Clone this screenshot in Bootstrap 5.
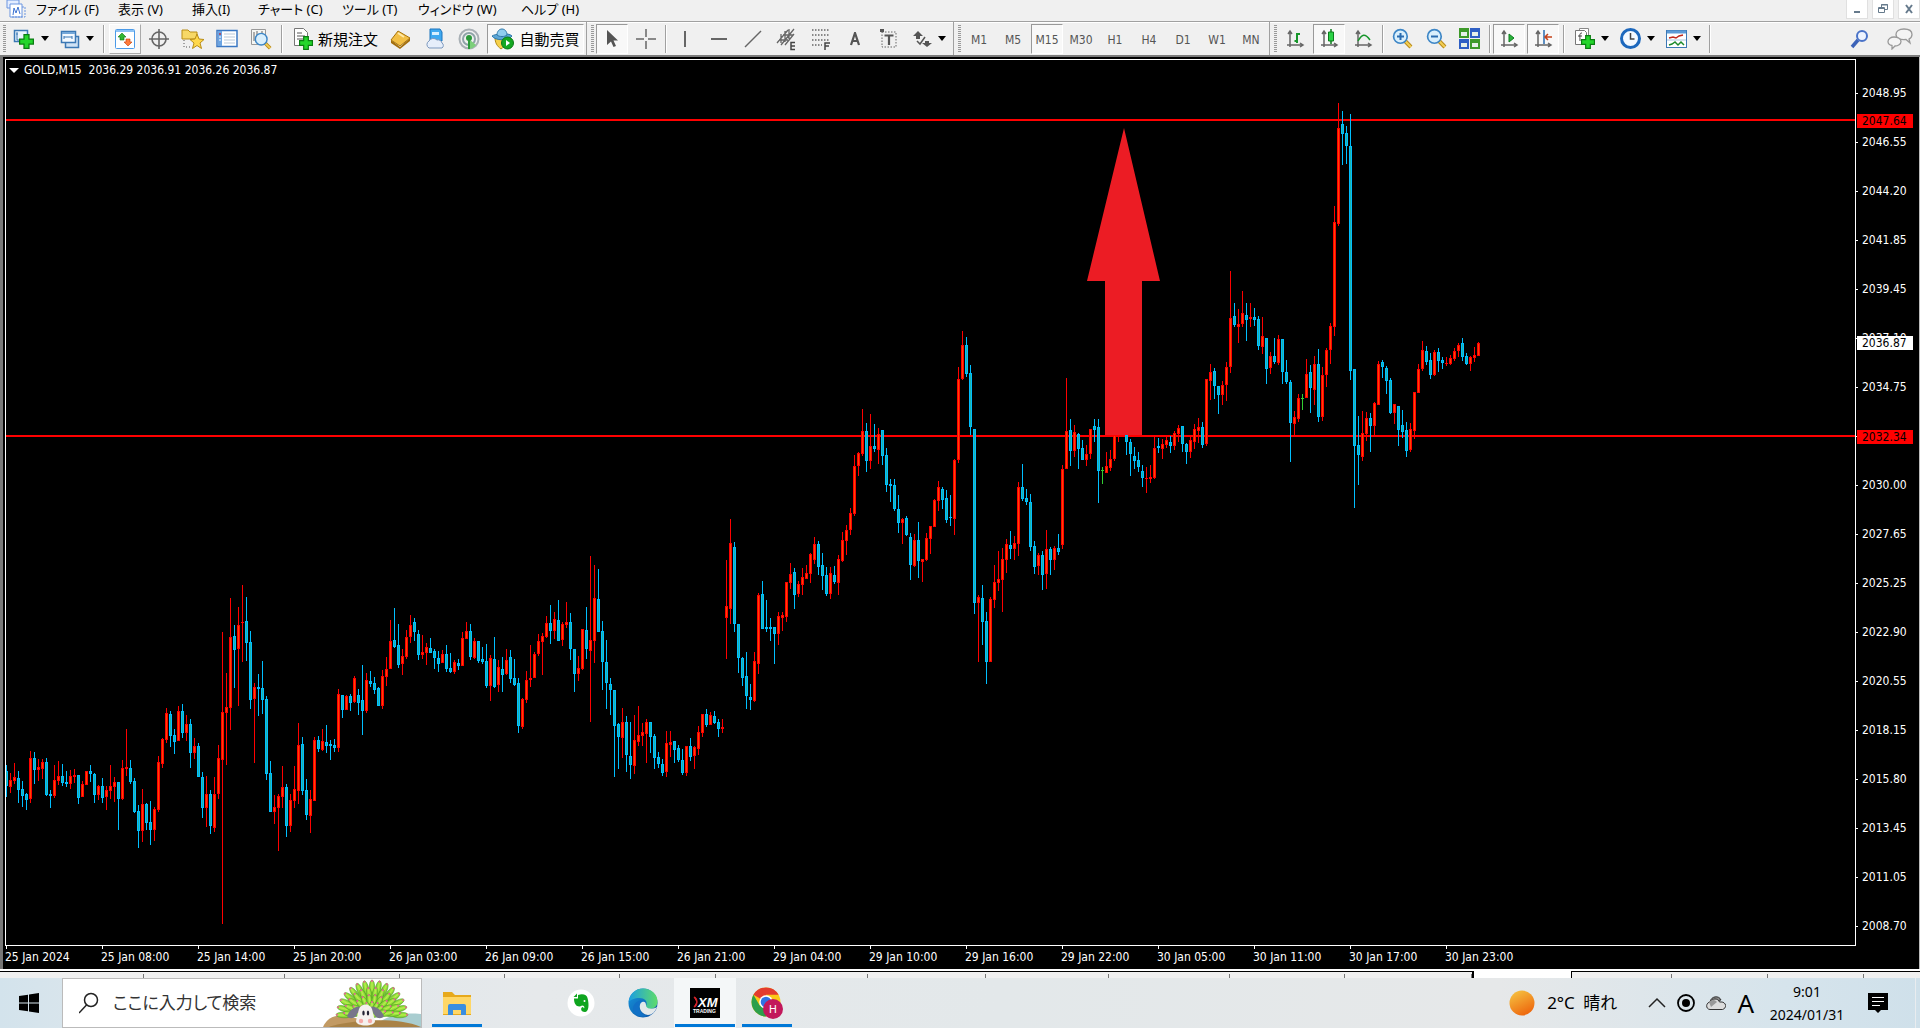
<!DOCTYPE html>
<html lang="ja">
<head>
<meta charset="utf-8">
<meta name="viewport" content="width=device-width, initial-scale=1">
<title>GOLD,M15</title>
<link rel="stylesheet" href="https://cdn.jsdelivr.net/npm/bootstrap@5.3.0/dist/css/bootstrap.min.css">
<style>
:root{--ui:"DejaVu Sans Condensed","Noto Sans","Noto Sans CJK JP",sans-serif;--jp:"Noto Sans","Noto Sans CJK JP",sans-serif}
body{background:#f0f0f0;font-family:var(--ui);font-size:12px;line-height:16px;color:#000;overflow-x:hidden}
button{font:inherit;color:inherit;background:none;border:1px solid transparent;padding:0}
svg{display:block;flex:none}
.menubar{height:21px;padding-left:6px}
.menu-list{grid-template-columns:82px 74px 66px 84px 76px 103px auto;font-family:var(--jp);font-size:13px;line-height:18px;font-feature-settings:"palt";margin-left:10px}
.menu-list button{text-align:left;border:0;white-space:nowrap}
.winbtn{width:22px;height:19px;background:#fff;border:1px solid #e0e0e0;border-top:0}
.toolbar{height:36px;border-top:1px solid #a0a0a0;border-bottom:2px solid #7c7c7c;gap:2px;box-shadow:inset 0 1px #fff}
.tb{width:32px;height:30px;display:flex;align-items:center;justify-content:center;flex:none;color:#555;white-space:nowrap}
.tb.tf{padding-top:2px}
.tb.drop{width:44px;gap:6px}
.tb.drop::after{content:"";border:4px solid transparent;border-top:5px solid #000;border-bottom:0}
.tb.order,.tb.auto{width:96px;gap:4px;font-family:var(--jp);font-size:15px;color:#000}
.tb.auto{width:97px}
.tb.on{border-color:#999 #fff #fff #999;background:#f8f8f8}
.tb.raised{border-color:#fff #aaa #aaa #fff;background:#f8f8f8}
.sep,.thin{width:6px;height:28px;flex:none;background:linear-gradient(90deg,transparent 2px,#a0a0a0 2px 3px,#fff 3px 4px,transparent 4px)}
.thin{width:3px;background:linear-gradient(90deg,transparent 1px,#a0a0a0 1px 2px,#fff 2px)}
.edge{width:8px;height:33px;flex:none;border-left:1px solid #a0a0a0;background:repeating-linear-gradient(#999 0 1px,#f0f0f0 1px 2px) 4px 3px/3px 27px no-repeat}
.edge:first-child{width:7px;border-left:0;background-position:3px 3px}
.chart{background:#000;color:#fff;border-left:3px solid #777;border-right:1px solid #bbb;padding:2px 0 0 2px}
.plot{border:1px solid #fff;overflow:hidden}
.plot svg{position:absolute;left:0;top:0;width:100%;height:100%}
.quote{left:3px;top:2px;white-space:pre}
.tri{border:5px solid transparent;border-top:5px solid #fff;border-bottom:0;margin-right:5px}
.paxis{width:63px;padding-top:10px}
.paxis .tick{height:49px;line-height:49px;padding-left:6px;position:relative}
.paxis .tick:last-of-type{height:40px}
.paxis .tick::before{content:"";position:absolute;left:0;top:24px;width:2px;height:1px;background:#fff}
.tag{position:absolute;left:1px;width:56px;height:14px;line-height:14px;padding-left:5px;color:#000;background:red}
.tag.r1{top:55px}.tag.r2{top:371px}.tag.now{top:277px;background:#fff}
.taxis{height:23px}
.taxis span{width:96px;flex:none;position:relative;padding-top:3px;line-height:16px;white-space:nowrap}
.taxis span::before{content:"";position:absolute;left:1px;top:0;width:1px;height:3px;background:#fff}
.tabs{height:9px;background:#f0f0f0;border-top:2px solid #fff;box-shadow:inset 0 1px #000;padding-top:3px}
.tabs i{flex:none;height:4px;border-right:1px solid #777}
.tabs i.cur{background:#fff;border-color:#000;height:7px;margin-top:-3px;border-left:2px solid #000;border-right-width:1px}
.taskbar{height:50px;background:linear-gradient(90deg,#d3e3ec 0,#dce6ec 6%,#e6e9eb 28%,#e3e8ea 52%,#e6e8e9 78%,#d6e4ec 93%,#cfe0ea);font-family:var(--jp)}
.start{width:60px}
.search{width:360px;height:50px;background:#fff;border:1px solid #bbb;overflow:hidden;gap:14px}
.search input{border:0;outline:0;background:none;font-size:17px;line-height:24px;font-feature-settings:"palt";flex:1;min-width:0;padding:0}
.search input::placeholder{color:#333;opacity:1}
.app{width:62px;height:50px;display:flex;align-items:center;justify-content:center;flex:none;position:relative}
.app.start{width:58px}
.app.run::after{content:"";position:absolute;left:5px;right:5px;bottom:0;height:3px;background:#0078d7}
.app.cur{background:#f4f7f8}.app.cur::after{left:0;right:0}
.tray{gap:11px}
.tray button{border:0;display:flex;align-items:center}
.weather{font-size:17px;line-height:24px;margin-right:20px;gap:12px}
.ime{font-size:26px;line-height:32px}
.clock{font-size:14px;line-height:23px;width:84px;flex-direction:column}
.notice{margin:0 16px 0 8px}
</style>
<script src="https://cdn.jsdelivr.net/npm/bootstrap@5.3.0/dist/js/bootstrap.bundle.min.js"></script>
</head>
<body class="d-flex flex-column min-vh-100">
<svg width="0" height="0" class="position-absolute" aria-hidden="true">
<defs>
<linearGradient id="sun" x1="0" y1="0" x2="0.5" y2="1"><stop stop-color="#f6c945"/><stop offset="1" stop-color="#ee6b10"/></linearGradient>
<linearGradient id="edgeA" x1="0" y1="0" x2="1" y2="0"><stop stop-color="#1b9de2"/><stop offset="1" stop-color="#5fdc6b"/></linearGradient>
<linearGradient id="edgeB" x1="0" y1="0" x2="1" y2="1"><stop stop-color="#1797df"/><stop offset="1" stop-color="#0b4ea0"/></linearGradient>
<linearGradient id="leaf" x1="0" y1="0" x2="1" y2="0"><stop stop-color="#6cc62a"/><stop offset=".5" stop-color="#b9f04c"/><stop offset="1" stop-color="#6cc62a"/></linearGradient>
<symbol id="plus" viewBox="0 0 12 12"><path d="M4 .5h4v3.500h3.500v4H8v3.500H4V8H.5V4H4z" fill="#24d62c" stroke="#0a7d12"/></symbol>
<symbol id="axes" viewBox="0 0 20 20"><path d="M5 18V3M3 5l2-3 2 3M2 16h15M15 14l3 2-3 2" fill="none" stroke="#666" stroke-width="1.500"/></symbol>
<symbol id="lens" viewBox="0 0 20 20"><path d="M12 12l6 6" stroke="#b98a1a" stroke-width="4"/><path d="M12 12l6 6" stroke="#f3cf55" stroke-width="2"/><circle cx="8" cy="8" r="6.500" fill="#d9effc" stroke="#3d86c6" stroke-width="1.600"/></symbol>
</defs>
</svg>

<header>
<div class="menubar d-flex align-items-start">
<svg width="20" height="18" viewBox="0 0 20 18"><path d="M1 0h12v8H1z" fill="#e4edff" stroke="#6b95e0"/><path d="M4 4h12v13H4z" fill="#fff" stroke="#6b95e0"/><path d="M7 15l1-7 2 5 2-6 2 7" fill="none" stroke="#3d73d2"/><path d="M16 7h3v10H6" fill="none" stroke="#6b95e0" stroke-dasharray="2 1"/></svg>
<nav class="menu-list d-grid">
<button>ファイル (F)</button><button>表示 (V)</button><button>挿入(I)</button><button>チャート (C)</button><button>ツール (T)</button><button>ウィンドウ (W)</button><button>ヘルプ (H)</button>
</nav>
<div class="ms-auto d-flex gap-1 me-0">
<button class="winbtn d-flex justify-content-center align-items-center" aria-label="最小化"><svg width="12" height="12"><path d="M3 9h6" stroke="#667a8c" stroke-width="2"/></svg></button>
<button class="winbtn d-flex justify-content-center align-items-center" aria-label="元に戻す"><svg width="12" height="12" fill="none" stroke="#667a8c"><path d="M4.500 4V1.500h6v5H8M4 2h7"/><path d="M1.500 4.500h6v5h-6zM1 5.500h7"/></svg></button>
<button class="winbtn d-flex justify-content-center align-items-center" aria-label="閉じる"><svg width="12" height="12"><path d="M3 2l6 8M9 2l-6 8" stroke="#667a8c" stroke-width="2"/></svg></button>
</div>
</div>

<div class="toolbar d-flex align-items-center">
<span class="edge"></span>
<button class="tb drop" aria-label="新規チャート"><svg width="22" height="20"><path d="M1.500 1.500h13v11h-13z" fill="#eaf4fd" stroke="#3b78b5" stroke-width="1.500"/><path d="M4 3v8h9M3 5h2M11 10v2" stroke="#3b78b5" fill="none"/><use href="#plus" x="6" y="5" width="15" height="15"/></svg></button>
<button class="tb drop" aria-label="プロファイル"><svg width="20" height="20"><path d="M5.500 7.500h13v11h-13z" fill="#cfe2f5" stroke="#3b78b5" stroke-width="1.500"/><path d="M1.500 2.500h14v11h-14z" fill="#f3f9ff" stroke="#3b78b5" stroke-width="1.500"/><path d="M2 4h13" stroke="#74a7d8" stroke-width="2"/><path d="M4 8h8M4 7v3M12 7v3" stroke="#3b78b5"/></svg></button>
<span class="sep"></span>
<button class="tb raised" aria-label="気配値"><svg width="20" height="20"><rect x=".5" y=".5" width="19" height="19" rx="1" fill="#fff" stroke="#4b9ae8"/><path d="M1 2h18" stroke="#8dc2f5" stroke-width="2"/><path d="M7 4l4 4H9v3H5V8H3z" fill="#31b631" stroke="#117711" stroke-width=".6"/><path d="M13 17l-4-4h2v-3h4v3h2z" fill="#ff7b3a" stroke="#c33d08" stroke-width=".6"/></svg></button>
<button class="tb" aria-label="データウィンドウ"><svg width="20" height="20" fill="none" stroke="#666" stroke-width="1.600"><circle cx="10" cy="10" r="7"/><path d="M10 0v20M0 10h20"/></svg></button>
<button class="tb" aria-label="ナビゲーター"><svg width="24" height="22"><path d="M1 2h6l2 2h7v7H1z" fill="#f7d866" stroke="#b98d16"/><path d="M3 12v7h7" fill="none" stroke="#555" stroke-dasharray="1 2"/><path d="M16 6l2 5 5 .5-4 3.500 1.500 5.500-4.500-3-4.500 3 1.500-5.500-4-3.500 5-.5z" fill="#ffd84a" stroke="#b98d16"/></svg></button>
<button class="tb" aria-label="ターミナル"><svg width="22" height="20"><rect x="1" y="1.500" width="20" height="16" fill="#fff" stroke="#3b78c4" stroke-width="1.500"/><path d="M2 2h4v15H2z" fill="#6ba4e2"/><path d="M8 5h11M8 8h11M8 11h11M8 14h11" stroke="#b9c9d9"/><path d="M3 5h2" stroke="#d00"/><path d="M3 8h2M3 11h2" stroke="#fff"/></svg></button>
<button class="tb" aria-label="ストラテジーテスター"><svg width="22" height="22"><path d="M1.500 1.500h14v15h-14z" fill="#f6f6f2" stroke="#999"/><path d="M4 4v9M7 3v6M12 3v8" stroke="#666"/><use href="#lens" x="4" y="4" width="18" height="18"/></svg></button>
<span class="sep"></span>
<button class="tb order"><svg width="22" height="24"><path d="M2.500 1.500h9l4 4v13h-13z" fill="#fff" stroke="#777"/><path d="M5 6h5M5 9h8M5 12h6" stroke="#555"/><use href="#plus" x="7" y="9" width="14" height="14"/></svg>新規注文</button>
<button class="tb" aria-label="メタエディター"><svg width="22" height="20"><path d="M1 11l9 7 10-9v3l-10 8-9-6z" fill="#a36e0c"/><path d="M8 2l12 7-10 8-9-6z" fill="#f2bf45" stroke="#a8740d"/><path d="M8 4l6 4" stroke="#ffe9a6" stroke-width="2"/></svg></button>
<button class="tb" aria-label="VPS"><svg width="22" height="22"><path d="M6 1h10l2 3v9H6z" fill="#3fa9f0" stroke="#1c75bd"/><path d="M8 4h7v3H8z" fill="#d7efff"/><path d="M5 20a4 4 0 0 1 0-7 5 5 0 0 1 8-1 4 4 0 0 1 5 3 3 3 0 0 1 0 5z" fill="#e6eefa" stroke="#7b97bd"/></svg></button>
<button class="tb" aria-label="シグナル"><svg width="22" height="22" fill="none"><circle cx="11" cy="11" r="9.500" stroke="#a9b0b5" stroke-width="2"/><circle cx="11" cy="11" r="6" stroke="#8fa3a8" stroke-width="2"/><path d="M11 11v10a10 10 0 0 0 7-4z" fill="#7ccf7a"/><circle cx="11" cy="10" r="3" fill="#2b9a3a"/><path d="M11 11v10" stroke="#2b9a3a" stroke-width="2"/></svg></button>
<button class="tb auto on"><svg width="24" height="22"><path d="M4 9h13c0 6-3 9-7 12-4-3-6-6-6-12z" fill="#f7d14b" stroke="#b18a17"/><path d="M1 8c3-2 16-4 20 0-3 5-17 5-20 0z" fill="#5aa5d6" stroke="#2f77a8"/><path d="M6 7c0-8 10-8 10 0-2 2-8 2-10 0z" fill="#8fcdf0" stroke="#2f77a8"/><circle cx="16.500" cy="15" r="6" fill="#15a823" stroke="#0b7a16"/><path d="M15 12l4 3-4 3z" fill="#fff"/></svg>自動売買</button>
<span class="edge"></span>
<button class="tb on" aria-label="カーソル"><svg width="14" height="20"><path d="M2 1v15l4-3.500L8.500 18l2.500-1-2.500-5.500H13z" fill="#555"/></svg></button>
<button class="tb" aria-label="十字カーソル"><svg width="20" height="20" stroke="#666" stroke-width="1.500"><path d="M10 0v8M10 12v8M0 10h8M12 10h8"/></svg></button>
<span class="thin"></span>
<button class="tb" aria-label="垂直線"><svg width="18" height="18"><path d="M9 1v16" stroke="#666" stroke-width="2"/></svg></button>
<button class="tb" aria-label="水平線"><svg width="18" height="18"><path d="M1 9h16" stroke="#666" stroke-width="2"/></svg></button>
<button class="tb" aria-label="トレンドライン"><svg width="18" height="18"><path d="M1 17L17 1" stroke="#666" stroke-width="1.500"/></svg></button>
<button class="tb" aria-label="チャネル"><svg width="22" height="24" stroke="#666" fill="none"><path d="M1 16L12 3M5 18L18 2M9 18L18 7M5 7v9M9 4v11M13 2v10M3 13h9M7 8h10" stroke-width="1.300"/><path d="M19 15.500h-4v7h4M15 19h4" stroke="#444" stroke-width="1.500"/></svg></button>
<button class="tb" aria-label="フィボナッチ"><svg width="22" height="24" fill="none"><path d="M2 3h18M2 8h18M2 13h18M2 18h10" stroke="#666" stroke-width="1.500" stroke-dasharray="1.500 1.500"/><path d="M15 23v-7h5M15 19h4" stroke="#444" stroke-width="1.500"/></svg></button>
<button class="tb" aria-label="テキスト"><svg width="12" height="14" fill="none" stroke="#555" stroke-width="2.200"><path d="M2 13L6 1l4 12M3 9h6"/></svg></button>
<button class="tb" aria-label="テキストラベル"><svg width="20" height="20" fill="none"><path d="M3 3h14v15H3z" stroke="#666" stroke-dasharray="1.500 1.500"/><path d="M5.500 6.500h9M10 6v10" stroke="#555" stroke-width="2.200"/><path d="M1 0h4v3H1z" fill="#555"/></svg></button>
<button class="tb drop" aria-label="矢印"><svg width="20" height="20"><path d="M6 2l5 5H8v3H4V7H1z" fill="#555"/><path d="M15 18l-5-4h3v-2h4v2h3z" fill="#555"/><path d="M5 12l3 3 5-7" fill="none" stroke="#555" stroke-width="1.500"/></svg></button>
<span class="edge"></span>
<button class="tb tf">M1</button><button class="tb tf">M5</button><button class="tb tf on">M15</button><button class="tb tf">M30</button><button class="tb tf">H1</button><button class="tb tf">H4</button><button class="tb tf">D1</button><button class="tb tf">W1</button><button class="tb tf">MN</button>
<span class="edge"></span>
<button class="tb" aria-label="バーチャート"><svg width="20" height="20"><use href="#axes"/><path d="M12 4v10M9.500 12H12M12 5h3" stroke="#17962b" stroke-width="2"/></svg></button>
<button class="tb on" aria-label="ローソク足"><svg width="20" height="20"><use href="#axes"/><path d="M12 0v15" stroke="#0c7d1d" stroke-width="1.500"/><path d="M9.500 3h5v9h-5z" fill="#2bd246" stroke="#0c7d1d"/></svg></button>
<button class="tb" aria-label="ラインチャート"><svg width="20" height="20"><use href="#axes"/><path d="M5 12c4-7 7-8 12-1" fill="none" stroke="#17962b" stroke-width="1.500"/></svg></button>
<span class="thin"></span>
<button class="tb" aria-label="ズームイン"><svg width="21" height="21"><use href="#lens"/><path d="M8.500 5v7M5 8.500h7" stroke="#2a6cb0" stroke-width="2"/></svg></button>
<button class="tb" aria-label="ズームアウト"><svg width="21" height="21"><use href="#lens"/><path d="M5 8.500h7" stroke="#2a6cb0" stroke-width="2"/></svg></button>
<button class="tb" aria-label="整列"><svg width="22" height="21"><path d="M0 0h10v10H0zM11 11h10v10H11z" fill="#3e9a2a"/><path d="M11 0h10v10H11zM0 11h10v10H0z" fill="#2e5fc4"/><path d="M2 4h6v4H2zM13 4h6v4h-6zM2 15h6v4H2zM13 15h6v4h-6z" fill="#e6f0e8"/></svg></button>
<span class="thin"></span>
<button class="tb on" aria-label="自動スクロール"><svg width="20" height="20"><use href="#axes"/><path d="M10 5l5 4-5 4z" fill="#2bb23c" stroke="#0c7d1d"/></svg></button>
<button class="tb on" aria-label="チャートシフト"><svg width="20" height="20"><use href="#axes"/><path d="M11 1v14" stroke="#2a6cb0" stroke-width="1.500"/><path d="M19 8h-6M15 5l-3 3 3 3" fill="none" stroke="#c4421a" stroke-width="1.500"/></svg></button>
<span class="sep"></span>
<button class="tb drop" aria-label="インディケータ"><svg width="21" height="23"><path d="M5.500 1.500h9v14h-9z" fill="#fff" stroke="#888"/><path d="M1.500 3.500h9l2 2v12h-11z" fill="#fff" stroke="#777"/><path d="M8 6c-3 0-2 2-2 8M4 9h4" stroke="#444" fill="none"/><use href="#plus" x="7" y="8" width="14" height="14"/></svg></button>
<button class="tb drop" aria-label="時間足"><svg width="21" height="21"><circle cx="10.500" cy="10.500" r="9" fill="#f4f9ff" stroke="#1d68bd" stroke-width="3"/><path d="M10.500 5v6h4" fill="none" stroke="#444" stroke-width="1.500"/></svg></button>
<button class="tb drop" aria-label="定型チャート"><svg width="21" height="20"><rect x=".5" y="1.500" width="20" height="17" fill="#fff" stroke="#3b78b5"/><path d="M1 3h19" stroke="#5c9ad6" stroke-width="3"/><path d="M3 9l4-1 3 1 3-2 4-1" fill="none" stroke="#c0281c" stroke-width="1.500"/><path d="M1 11h19" stroke="#aac6df"/><path d="M3 16l3-1 3-2 3 3 3-3 3 3" fill="none" stroke="#1d8a2c" stroke-width="1.500"/></svg></button>
<span class="sep"></span>
<div class="ms-auto d-flex gap-2 pe-1">
<button class="tb" aria-label="検索"><svg width="20" height="20" fill="none"><path d="M2 18l6-7" stroke="#3c63b8" stroke-width="3.500"/><circle cx="12" cy="7" r="5" fill="#eef4ff" stroke="#4a73c8" stroke-width="2"/></svg></button>
<button class="tb" aria-label="チャット"><svg width="27" height="22" fill="#f4f4f4" stroke="#999" stroke-width="1.300"><path d="M17 1c5 0 8 2 8 5.500 0 2-1 3.500-3 4.500l1 4-4-3.500c-6 .5-10-1-10-5C9 3 12 1 17 1z"/><path d="M7 9c4 0 7 2 7 4.500S11 18 8 18l-3 3v-3.500c-3-.5-4-2-4-4C1 11 4 9 7 9z"/></svg></button>
</div>
</div>
</header>

<main class="chart flex-grow-1 d-flex flex-column">
<div class="d-flex flex-grow-1">
<div class="plot flex-grow-1 position-relative">
<svg id="candles" shape-rendering="crispEdges">
<rect y="59" width="100%" height="2" fill="red"/><rect y="375" width="100%" height="2" fill="red"/>
<g id="bars"></g>
<path d="M1118 68l36 153h-18v154h-37V221h-18z" fill="#ec1c24" shape-rendering="auto"/>
</svg>
<div class="quote position-absolute d-flex align-items-center"><span class="tri"></span>GOLD,M15  2036.29 2036.91 2036.26 2036.87</div>
</div>
<div class="paxis position-relative flex-shrink-0" id="prices">
<span class="tag r1">2047.64</span><span class="tag now">2036.87</span><span class="tag r2">2032.34</span>
</div>
</div>
<div class="taxis d-flex overflow-hidden" id="times"></div>
</main>

<div class="tabs d-flex" id="tabs"></div>

<footer class="taskbar d-flex align-items-stretch">
<button class="app start" aria-label="スタート"><svg width="20" height="20"><path d="M0 3l9-1.300V9.500H0zM10 1.500L20 0v9.500H10zM0 10.500h9v7.800L0 17zM10 10.500h10V20l-10-1.500z" fill="#000"/></svg></button>
<div class="search d-flex align-items-center ps-3 ms-1">
<svg width="20" height="22" fill="none" stroke="#222" stroke-width="1.500"><circle cx="12" cy="8" r="6.500"/><path d="M7.500 13L0 21"/></svg>
<label for="q" class="visually-hidden">検索</label>
<input id="q" type="text" placeholder="ここに入力して検索">
<svg width="98" height="48" viewBox="0 0 98 48"><path d="M0 48c4-9 12-13 22-11l20 4v7z" fill="#c29a63"/><path d="M50 48c16-14 30-14 48-13v13z" fill="#a9cdd0"/><path d="M6 48c14-5 64-12 92 0z" fill="#a98246"/><g id="fronds"></g><path d="M24 37c3-7 10-11 14-9l-5 9c-3 3-7 3-9 0zM61 37c-3-7-10-11-14-9l5 9c3 3 7 3 9 0z" fill="#77758a"/><path d="M36 30c2-6 11-6 13 0l3 12c0 6-19 6-19 0z" fill="#f4f1ee"/><ellipse cx="40.500" cy="34" rx="1.200" ry="2.500" fill="#223"/><ellipse cx="45" cy="34" rx="1.200" ry="2.500" fill="#223"/><circle cx="38" cy="42" r="2.200" fill="#f6aaa8"/><circle cx="47" cy="42" r="2.200" fill="#f6aaa8"/></svg>
</div>
<div class="d-flex ps-1">
<button class="app run" aria-label="エクスプローラー"><svg width="28" height="24"><path d="M0 1h9l3 3h16v20H0z" fill="#e7a91c"/><path d="M0 6h28v17H0z" fill="#ffd766"/><path d="M5 24v-9q0-2 2-2h14q2 0 2 2v9h-5v-5h-8v5z" fill="#3a8ee0"/></svg></button>
<span class="app"></span>
<button class="app" aria-label="Evernote"><svg width="28" height="28"><circle cx="14" cy="14" r="13.500" fill="#fff"/><path d="M7 9.500h4V6c5-2 9 0 9.500 3 2 7 1 14-2.500 14-5 0-4.500-5-2-5l1 1.500c1-1.500 0-3-2-3-3 2-8 1-8-7zM6.500 8L10 4.500V8z" fill="#0fa51f"/><circle cx="17.500" cy="12" r="1" fill="#fff"/></svg></button>
<button class="app" aria-label="Edge"><svg width="30" height="30"><circle cx="15" cy="15" r="14.500" fill="url(#edgeB)"/><path d="M.6 14C2 5 8 .5 15 .5 24 .5 30 7 29.500 14c-.5 5-4 7-8 7-4 0-5-2-3-4 1-4-2-7-7-7-5 0-9 2-10.900 4z" fill="url(#edgeA)"/><path d="M29 19c-3 2-11 3-11-2 0-3-2-4-4-3-4 2-3 12 6 13 4 0 7-3 9-8z" fill="#e3e8ea"/><path d="M12 15c-3 5 0 11 7 13-7 2-13-1-14-7 0-6 6-10 10-8z" fill="#1170c6"/></svg></button>
<button class="app run cur" aria-label="XM"><svg width="30" height="30"><path d="M0 0h30v30H0z" fill="#000"/><path d="M4 9l3 5-3 5c2 0 3-2 3-5s-1-5-3-5z" fill="#d8232a" stroke="#d8232a"/><text x="8" y="19" font-family="Liberation Sans,sans-serif" font-size="13" font-weight="700" font-style="italic" fill="#fff">XM</text><text x="3" y="25" font-family="Liberation Sans,sans-serif" font-size="5" font-weight="700" fill="#fff">TRADING</text></svg></button>
<button class="app run" aria-label="Chrome"><svg width="32" height="32" viewBox="0 0 32 32"><circle cx="15" cy="15" r="14.500" fill="#fbc916"/><path d="M15 15L2.400 7.800A14.500 14.500 0 0 1 27.600 7.800H15z" fill="#e33b2e"/><path d="M15 15l-6.300 3.600L2.400 7.800A14.500 14.500 0 0 0 15 29.500l6-11z" fill="#2c9f4b"/><circle cx="15" cy="15" r="6.800" fill="#fff"/><circle cx="15" cy="15" r="5.300" fill="#2f72e4"/><circle cx="22" cy="22" r="10" fill="#c2185b"/><text x="22" y="26" text-anchor="middle" font-family="Roboto,sans-serif" font-size="11" fill="#fff">H</text></svg></button>
</div>
<div class="tray ms-auto d-flex align-items-center">
<button class="weather"><svg width="26" height="26"><circle cx="13" cy="13" r="12.500" fill="url(#sun)"/></svg><span>2°C&ensp;晴れ</span></button>
<button aria-label="隠れているインジケーター"><svg width="18" height="12" fill="none" stroke="#222" stroke-width="1.500"><path d="M1 10l8-8 8 8"/></svg></button>
<button aria-label="録画"><svg width="18" height="18"><circle cx="9" cy="9" r="8" fill="none" stroke="#000" stroke-width="1.800"/><circle cx="9" cy="9" r="4" fill="#000"/></svg></button>
<button aria-label="OneDrive"><svg width="20" height="14"><path d="M4 6C5 0 13-1 15 4z" fill="#888" stroke="#333"/><path d="M4 13.500C-1 13 0 6 4.500 6 6 2 12 2 13.500 6c7-1 8 6 3 7.500z" fill="#ddd" stroke="#333"/><path d="M3 6c2-2 5-3 8 0l-6 5z" fill="#999"/></svg></button>
<button class="ime" aria-label="IME">A</button>
<button class="clock justify-content-center"><span>9:01</span><span>2024/01/31</span></button>
<button class="notice" aria-label="通知"><svg width="20" height="20"><path d="M0 0h20v17h-7l-3 3-3-3H0z"/><path d="M4 4.500h12M4 8.500h12M4 12.500h8" stroke="#fff"/></svg></button>
<span class="align-self-stretch border-start border-secondary-subtle pe-1"></span>
</div>
</footer>

<script>
/* Bars in order, one every 4px. Each record: direction, high, body top, body bottom, low,
   measured in thirds of a pixel below the origin of its run. */
const runs = [
[500,0,"b615,633,678,711 r639,660,681,699 r609,651,663,672 b633,654,690,729 b663,687,708,741 b699,702,720,750 r573,594,717,729 b576,594,630,672 r597,621,630,663 r597,606,627,657 b594,606,705,708 b690,702,708,744 r615,660,708,714 r603,648,663,675 b612,648,669,678 b633,666,672,681 r630,648,672,687 r627,645,651,669 b645,645,714,732 r663,672,711,711 r633,633,675,675 b615,633,642,666 b639,642,705,729 r675,678,705,720 b654,678,714,729 r678,690,711,750 r615,678,693,717 r651,666,681,726 b666,666,717,810 r600,624,717,720 r507,621,627,648 b600,624,666,672 b654,663,756,759 b735,753,813,864 r687,732,813,846 b729,732,789,810 b723,786,810,855 r741,747,810,843 r588,606,750,756 r534,537,612,624 r444,459,540,549 b453,462,528,561 b507,525,546,582 r438,453,543,543 b432,453,519,534 r465,492,519,543 b477,492,579,624 r534,558,579,597 b549,558,651,651 b636,651,744,774 r648,702,744,801 b690,702,798,822 r651,702,804,816 r555,594,702,717 r216,456,600,1092 r339,441,459,615 r114,231,444,510 b195,228,270,384 r141,195,267,438 r75,186,189,306 b111,183,249,303 b213,246,420,447 r369,381,417,609 b342,381,387,468 b303,384,420,462 b408,417,642,660 b603,639,756,756 r705,741,756,792 r702,708,744,873 r618,681,711,744 b672,681,798,831 r702,720,798,816 r618,687,723,744 r489,555,693,732 b531,552,693,705 b657,690,765,780 r690,717,768,819 r531,540,723,723 b528,540,567,576 r507,543,570,573 b495,546,558,579 b540,552,558,600 b537,555,564,576 r387,402,564,576 b405,405,450,474 r405,408,450,450 b402,408,429,453 r348,354,426,429 b387,405,429,465 b315,420,453,525 r339,360,453,459 b333,363,372,381 b351,369,390,402 b381,384,438,438"],
[480,94,"r390,408,498,507 r351,387,411,438 r240,303,387,387 b204,300,321,324 b252,315,375,384 r327,348,372,405 r270,291,351,357 r225,255,291,309 b234,246,276,303 b270,282,345,360 r285,336,345,357 r309,321,339,375 b294,324,339,339 b327,333,354,387 b333,354,372,396 r330,342,369,369 b315,342,387,396 b339,384,396,399 r360,366,396,402 b357,369,378,390 r276,294,378,378 r246,273,297,297 b252,273,351,360 r294,303,354,357 b303,303,363,369 b321,357,366,372 b312,363,438,444 r345,354,438,483 b291,357,441,444 r360,381,435,456 b351,387,405,456 r327,360,402,405 b330,351,417,429 b357,414,435,438 b414,429,558,579 r474,477,561,567 r393,420,480,489 r315,414,420,441 r336,342,414,414 r282,303,342,348 r279,288,306,405 r228,249,291,294 b195,249,273,312 r216,237,273,297 b180,240,303,303 r246,252,300,318 r186,246,255,264 b219,246,327,360 b327,327,402,456 r348,384,402,423 r267,267,387,390 b201,270,327,357 r48,300,333,546 r75,174,303,369 b87,177,276,276 b243,273,366,450 b300,366,429,507 b414,432,450,525 b450,450,558,711 b549,552,591,687 r504,546,594,654 b528,546,645,696 b546,648,675,717 r525,600,678,702 r498,585,606,618 r549,576,588,618 r537,546,582,669 b546,546,591,639 b582,588,654,687 b636,651,672,684 b657,672,699,708 r573,609,696,711 r573,606,615,651 b603,603,630,669 b615,624,660,666 b627,660,699,705 r618,618,699,708 b594,618,651,663 r618,621,648,687 r558,576,627,645 r522,522,579,591 b507,522,555,561 r516,525,555,555 b513,528,549,552 b537,546,567,591 r537,561,567,579 r60,198,234,357 r-63,9,207,252 b6,21,252,276 b252,252,354,399 b351,354,414,438 b336,408,468,507 b432,471,480,510 r336,363,483,486 r159,165,372,402 b123,162,267,267 b180,261,267,276 b234,261,267,303 b261,261,282,372"],
[320,193,"r696,708,762,795 r696,705,714,753 r606,606,711,726 r549,582,609,627 b564,576,645,687 r603,612,642,651 r564,591,615,645 r555,579,597,597 r519,522,582,609 r471,492,540,552 b483,492,561,585 b519,555,588,630 b561,585,642,648 r561,579,642,657 b558,585,606,612 r525,537,609,645 r456,480,543,546 r435,450,483,525 r384,399,450,465 r225,258,402,408 r216,219,258,288 r87,153,222,228 b129,153,243,276 r102,198,243,267 b132,198,207,216 r144,162,210,252 b150,150,228,255 b204,225,315,336 b297,312,318,366 b297,315,387,393 b345,387,429,459 r414,417,429,492 b408,414,465,468 b459,471,555,600 r462,480,558,561 b426,480,543,594 r537,537,546,606 r459,474,540,543 r438,438,477,522 r357,360,441,441 r303,321,363,393 b321,327,360,387 b330,354,420,429 b345,411,414,438 r237,240,417,465 r-39,-3,240,249 r-147,-105,-3,0 b-129,-105,-18,-9 b-45,-21,141,165 b147,147,669,702 r645,651,669,846 b615,654,726,795 b696,723,846,912 r651,657,846,846 r555,606,660,684 r513,597,609,633 r504,537,600,696 r477,492,540,579 b453,495,507,537 r468,489,507,540 r306,321,492,528 b252,321,357,363 b327,354,366,375 b342,366,501,513 b483,498,561,582 r519,525,558,585 b513,525,585,630 r450,507,582,627 b501,507,540,585 r498,504,540,570 b462,504,516,525 r255,267,495,507"],
[190,265,"r384,543,657,657 b507,540,603,648 r525,546,603,621 b549,552,597,657 b570,594,630,630 r585,612,630,648 r537,537,612,627 b507,528,540,576 b507,531,663,759 g651,660,663,702 r606,648,669,669 r600,627,654,663 r555,555,627,633 r540,540,555,576 r530,530,540,550 b555,555,576,615 b567,576,612,678 b591,618,633,657 b606,630,651,666 b645,663,684,711 r651,684,687,729 r645,681,687,699 r561,594,684,687 b564,588,594,609 r567,582,597,627 r561,570,585,594 b558,576,588,609 r543,549,588,600 r525,534,552,576 b528,528,582,606 b579,582,606,642 r561,570,606,624 r522,537,576,597 r504,531,543,579 b516,531,585,594 r387,387,582,588 r342,366,393,450 b354,363,408,447 b408,408,435,492 r393,405,435,465 r336,351,405,453 r63,204,351,369 b159,198,225,231 r177,222,231,279 r123,189,222,231 b159,195,210,273 r159,201,207,231 b174,201,210,228 b198,207,288,300 r201,258,291,312 b264,264,357,402 r306,318,354,372 b264,318,336,342 r255,267,339,345 b267,267,366,402 b330,366,396,402 b390,396,519,636 r483,501,522,555 r432,444,507,516 g432,444,447,480 r327,372,444,444 b345,366,414,489 r318,342,420,465 b297,342,501,516 r351,375,501,513 r294,300,375,411 r219,228,300,342"],
[30,332,"r348,396,711,738 r39,114,402,408 b63,102,132,225 b108,129,168,222 b72,168,843,870 b837,837,1068,1254 b978,1065,1095,1185 r963,1029,1101,1113 r966,984,1032,1053 b969,984,1008,1086 r936,939,1008,1038 r813,822,945,945 b810,816,831,864 b828,834,873,912 b864,870,969,972 r942,942,969,1002 b948,948,1020,1068 b960,1005,1026,1044 b996,1020,1083,1101 r999,1017,1080,1086 r906,906,1023,1047 r822,837,909,909 r753,780,837,843 b768,783,816,825 b789,810,855,867 r780,786,855,858 b774,786,813,846 b801,810,819,837 r801,819,822,828 r795,804,822,825 r774,783,807,813 r759,765,783,801 b744,759,801,813 b789,798,822,825 r798,801,822,843 r771,795,804,816 r756,759,798,798"]];
const edge = {r:"#ff0000", b:"#00bfff", g:"#32cd32"}, core = {r:"#ff4500", b:"#20b2aa", g:"#32cd32"};
const box = (x,y,w,h,c) => `<rect x="${x}" y="${y}" width="${w}" height="${h}" fill="${c}"/>`;
let out = "";
for (const [base, first, text] of runs) text.split(" ").forEach((rec, k) => {
  const c = rec[0], x = (first + k) * 4;
  const [hi, top, bot, lo] = rec.slice(1).split(",").map(v => base + Math.round(v / 3));
  out += box(x, hi, 1, lo - hi, edge[c]) + box(x - 1, top, 3, bot - top, edge[c]);
  if (bot - top > 2) out += box(x, top + 1, 1, bot - top - 2, core[c]);
});
document.getElementById("bars").innerHTML = out;

document.getElementById("prices").insertAdjacentHTML("afterbegin",
 "2048.95 2046.55 2044.20 2041.85 2039.45 2037.10 2034.75 2032.35 2030.00 2027.65 2025.25 2022.90 2020.55 2018.15 2015.80 2013.45 2011.05 2008.70"
 .split(" ").map(p => `<div class="tick">${p}</div>`).join(""));
document.getElementById("times").innerHTML =
 ["25 Jan 2024","25 Jan 08:00","25 Jan 14:00","25 Jan 20:00","26 Jan 03:00","26 Jan 09:00","26 Jan 15:00","26 Jan 21:00","29 Jan 04:00","29 Jan 10:00","29 Jan 16:00","29 Jan 22:00","30 Jan 05:00","30 Jan 11:00","30 Jan 17:00","30 Jan 23:00"]
 .map(t => `<span>${t}</span>`).join("");
/* right edges of the workspace tabs; the open one is drawn white */
let last = 0;
document.getElementById("tabs").innerHTML =
 [144,285,400,505,620,716,868,986,1109,1230,1345,1472,1572,1672,1768,1864].map(x => {
  const w = x - last; last = x;
  return `<i class="${x === 1572 ? "cur" : ""}" style="width:${w}px"></i>`;
 }).join("");
/* leaf crown: rings of leaves with pink tips, outermost ring first */
let f = "";
for (const [r, n, span] of [[35,15,88],[28,12,84],[21,10,80],[14,7,70]])
 for (let i = 0; i < n; i++) {
  const a = -span + 2 * span * i / (n - 1);
  f += `<g transform="translate(49 37) rotate(${a})"><ellipse cy="${-r + 7}" rx="2.800" ry="8" fill="url(#leaf)" stroke="#4c9a1c" stroke-width=".5"/><circle cy="${-r}" r="1" fill="#e8609a"/></g>`;
 }
document.getElementById("fronds").innerHTML = f;
</script>
</body>
</html>
